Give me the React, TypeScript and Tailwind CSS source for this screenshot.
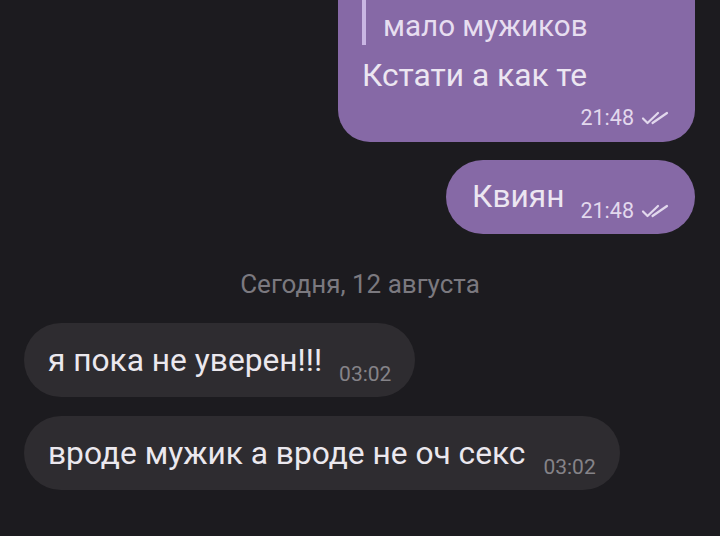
import React from "react"

const font = { fontFamily: "Roboto, 'Noto Sans', sans-serif" }

const DoubleCheck = () => (
  <svg width="28" height="16" viewBox="0 0 28 16" fill="none" className="ml-[7px]">
    <path d="M2 8.5 L6.5 13 L17 3" stroke="#e2d8ed" strokeWidth="2.2" strokeLinecap="round" strokeLinejoin="round" />
    <path d="M11.5 13 L26 3" stroke="#e2d8ed" strokeWidth="2.2" strokeLinecap="round" />
  </svg>
)

const SentTime = ({ t }: { t: string }) => (
  <span className="inline-flex items-center text-[21.5px] leading-[21px] text-[#e2d8ed]">
    {t}
    <DoubleCheck />
  </span>
)

const App = () => {
  return (
    <div className="w-[720px] h-[536px] overflow-hidden bg-[#1c1b1f] text-[#ece6f1]" style={font}>
      <div className="flex flex-col">
        <div className="flex justify-end pr-[25px] -mt-[66px]">
          <div className="w-[357px] bg-[#8669a6] rounded-[32px] pl-6 pr-[26px] pt-5 pb-[14px]">
            <div className="border-l-4 border-[#c9b6e3] pl-[17px]">
              <div className="text-[29.6px] leading-[54px] text-[#e7def0]">Тут реально</div>
              <div className="text-[29.6px] leading-[37px] text-[#e7def0]">мало мужиков</div>
            </div>
            <div className="text-[31.7px] leading-[38px] mt-3">Кстати а как те</div>
            <div className="flex justify-end mt-3">
              <SentTime t="21:48" />
            </div>
          </div>
        </div>

        <div className="flex justify-end pr-[25px] mt-[18px]">
          <div className="h-[74px] bg-[#8669a6] rounded-[37px] pl-[26px] pr-[26px] pt-[18px] flex items-start">
            <span className="text-[31.7px] leading-[38px]">Квиян</span>
            <span className="ml-4 mt-[22px]">
              <SentTime t="21:48" />
            </span>
          </div>
        </div>

        <div className="text-center text-[26px] leading-[26px] text-[#7b797f] mt-[37px]">
          Сегодня, 12 августа
        </div>

        <div className="flex pl-6 mt-[26px]">
          <div className="h-[74px] bg-[#2e2c30] rounded-[37px] pl-6 pr-6 pt-[19px] flex items-start">
            <span className="text-[31.7px] leading-[38px] text-[#ebe8ee]">я пока не уверен!!!</span>
            <span className="ml-[17px] mt-[22px] text-[21px] leading-[21px] text-[#858388]">03:02</span>
          </div>
        </div>

        <div className="flex pl-6 mt-[19px]">
          <div className="h-[74px] bg-[#2e2c30] rounded-[37px] pl-6 pr-6 pt-[19px] flex items-start">
            <span className="text-[31.7px] leading-[38px] text-[#ebe8ee]">вроде мужик а вроде не оч секс</span>
            <span className="ml-[18px] mt-[22px] text-[21px] leading-[21px] text-[#858388]">03:02</span>
          </div>
        </div>
      </div>
    </div>
  )
}

export default App
